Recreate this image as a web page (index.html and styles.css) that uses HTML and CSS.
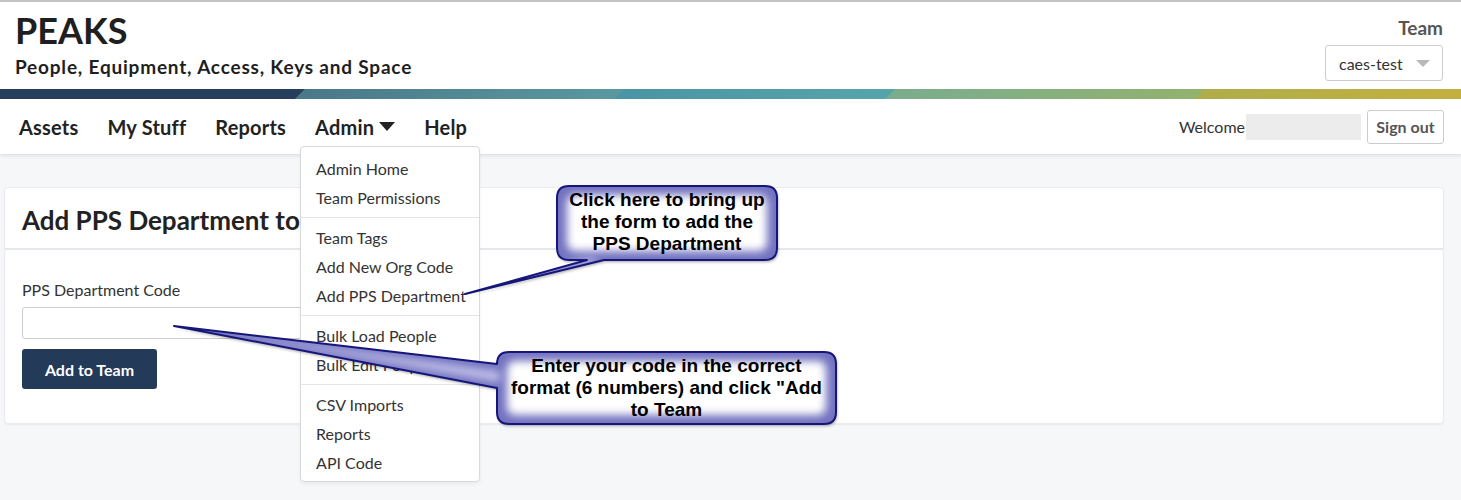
FILE: index.html
```html
<!DOCTYPE html>
<html lang="en">
<head>
<meta charset="utf-8">
<title>PEAKS</title>
<link rel="stylesheet" href="styles.css">
</head>
<body>
<div class="page">
  <header class="masthead">
    <div class="brand">
      <h1 class="brand-title">PEAKS</h1>
      <p class="brand-sub">People, Equipment, Access, Keys and Space</p>
    </div>
    <div class="team">
      <div class="team-label">Team</div>
      <div class="team-select"><span>caes-test</span><span class="select-caret"></span></div>
    </div>
  </header>
  <div class="stripe"></div>
  <nav class="navbar">
    <ul class="nav-links">
      <li class="nav-item">Assets</li>
      <li class="nav-item">My Stuff</li>
      <li class="nav-item">Reports</li>
      <li class="nav-item nav-admin">Admin<span class="nav-caret"></span>
        <div class="dropdown">
          <div class="dd-item">Admin Home</div>
          <div class="dd-item">Team Permissions</div>
          <div class="dd-divider"></div>
          <div class="dd-item">Team Tags</div>
          <div class="dd-item">Add New Org Code</div>
          <div class="dd-item">Add PPS Department</div>
          <div class="dd-divider"></div>
          <div class="dd-item">Bulk Load People</div>
          <div class="dd-item">Bulk Edit People</div>
          <div class="dd-divider"></div>
          <div class="dd-item">CSV Imports</div>
          <div class="dd-item">Reports</div>
          <div class="dd-item">API Code</div>
        </div>
      </li>
      <li class="nav-item">Help</li>
    </ul>
    <div class="nav-user">
      <span class="welcome">Welcome</span>
      <span class="user-blur"></span>
      <button class="btn-signout">Sign out</button>
    </div>
  </nav>
  <main class="content">
    <section class="card">
      <div class="card-header"><h2>Add PPS Department to Team</h2></div>
      <div class="card-body">
        <label class="field-label">PPS Department Code</label>
        <input class="field-input" type="text">
        <button class="btn-primary">Add to Team</button>
      </div>
    </section>
  </main>

  <svg class="callout-shapes" width="1461" height="500" viewBox="0 0 1461 500" aria-hidden="true">
    <defs>
      <path id="shape1" d="M569,186 H765 Q777,186 777,198 V248 Q777,260 765,260 H604 L465,294 L587,260 H569 Q557,260 557,248 V198 Q557,186 569,186 Z"/>
      <path id="shape2" d="M509,352 H824 Q836,352 836,364 V412 Q836,424 824,424 H509 Q497,424 497,412 V388 L174,326 L497,364 Q497,352 509,352 Z"/>
      <clipPath id="clip1"><use href="#shape1"/></clipPath>
      <clipPath id="clip2"><use href="#shape2"/></clipPath>
      <filter id="soft" x="-20%" y="-50%" width="140%" height="200%">
        <feGaussianBlur stdDeviation="4.5"/>
      </filter>
      <filter id="shadow" x="-10%" y="-10%" width="120%" height="130%">
        <feDropShadow dx="1" dy="2" stdDeviation="1.5" flood-color="#000" flood-opacity="0.35"/>
      </filter>
    </defs>
    <use href="#shape1" fill="#7272c0" filter="url(#shadow)"/>
    <g clip-path="url(#clip1)">
      <rect x="567" y="195" width="200" height="56" rx="8" fill="#fff" filter="url(#soft)"/>
      <path d="M600,262 L470,292 L590,258 Z" fill="#c8c8ec" filter="url(#soft)"/>
    </g>
    <use href="#shape1" fill="none" stroke="#16167a" stroke-width="2" stroke-linejoin="round"/>

    <use href="#shape2" fill="#7272c0" filter="url(#shadow)"/>
    <g clip-path="url(#clip2)">
      <rect x="507" y="361" width="319" height="54" rx="8" fill="#fff" filter="url(#soft)"/>
      <path d="M500,372 L180,326 L500,382 Z" fill="#c8c8ec" filter="url(#soft)"/>
    </g>
    <use href="#shape2" fill="none" stroke="#16167a" stroke-width="2" stroke-linejoin="round"/>
  </svg>
  <div class="callout callout-one">Click here to bring up the form to add the PPS Department</div>
  <div class="callout callout-two">Enter your code in the correct format (6 numbers) and click "Add to Team</div>
</div>
</body>
</html>
```
FILE: styles.css
```css
* { box-sizing: border-box; }
html, body { margin: 0; padding: 0; }
body {
  font-family: Lato, "Open Sans", "Liberation Sans", sans-serif;
  color: #222;
  background: #f6f7f9;
  width: 1461px;
  height: 500px;
  overflow: hidden;
}
.page { position: relative; width: 1461px; height: 500px; }

.masthead {
  display: flex;
  justify-content: space-between;
  background: #fff;
  border-top: 2px solid #c4c4c4;
  height: 89px;
  padding: 0 18px 0 15px;
}
.brand-title {
  margin: 7px 0 0;
  font-size: 36px;
  font-weight: 700;
  line-height: 42px;
  color: #1f1f1f;
}
.brand-sub {
  margin: 5px 0 0;
  font-size: 19px;
  font-weight: 700;
  letter-spacing: 0.8px;
  line-height: 22px;
  color: #1f1f1f;
}
.team {
  display: flex;
  flex-direction: column;
  align-items: flex-end;
}
.team-label {
  margin-top: 14px;
  font-size: 19px;
  font-weight: 700;
  line-height: 24px;
  color: #555;
}
.team-select {
  margin-top: 5px;
  width: 118px;
  height: 36px;
  border: 1px solid #ccc;
  border-radius: 3px;
  display: flex;
  align-items: center;
  justify-content: space-between;
  padding: 0 12px 0 13px;
  font-size: 16px;
  color: #333;
}
.select-caret {
  width: 0; height: 0;
  border-left: 7px solid transparent;
  border-right: 7px solid transparent;
  border-top: 7px solid #b9b9bd;
}

.stripe {
  height: 10px;
  background: linear-gradient(135deg,
    #253f5d 0px, #253f5d 215px,
    #4a7888 216px, #5a98a1 441px,
    #4a95a5 442px, #56a4ab 632px,
    #7aad8e 634px, #92b26e 851px,
    #afad4a 853px, #c4b03f 1040px);
}

.navbar {
  position: relative;
  z-index: 2;
  display: flex;
  justify-content: space-between;
  align-items: center;
  height: 56px;
  background: #fff;
  border-bottom: 1px solid #e2e3e7;
  box-shadow: 0 2px 3px rgba(0,0,0,0.06);
  padding: 0 17px 0 19px;
}
.nav-links {
  display: flex;
  gap: 29px;
  list-style: none;
  margin: 0;
  padding: 0;
}
.nav-item {
  font-size: 20px;
  font-weight: 700;
  letter-spacing: 0.2px;
  color: #222;
  line-height: 58px;
}
.nav-admin { position: relative; }
.nav-caret {
  display: inline-block;
  width: 0; height: 0;
  margin-left: 5px;
  vertical-align: 4px;
  border-left: 8px solid transparent;
  border-right: 8px solid transparent;
  border-top: 9px solid #222;
}
.nav-user { display: flex; align-items: center; }
.welcome { font-size: 16px; color: #333; }
.user-blur {
  display: inline-block;
  width: 115px;
  height: 26px;
  margin-left: 1px;
  background: #ececec;
}
.btn-signout {
  margin-left: 6px;
  width: 77px;
  height: 34px;
  background: #fff;
  border: 1px solid #ccc;
  border-radius: 3px;
  font-family: inherit;
  font-size: 16px;
  font-weight: 700;
  color: #555;
  padding: 0;
}

.dropdown {
  position: absolute;
  top: 48px;
  left: -15px;
  width: 180px;
  background: #fff;
  border: 1px solid #d9d9d9;
  border-radius: 4px;
  padding: 7px 0 4px;
  line-height: normal;
  letter-spacing: 0;
  box-shadow: 0 2px 4px rgba(0,0,0,0.05);
}
.dd-item {
  height: 29px;
  line-height: 30px;
  padding-left: 15px;
  font-size: 16px;
  font-weight: 400;
  color: #333;
  white-space: nowrap;
}
.dd-divider {
  height: 1px;
  margin: 5px 0;
  background: #e4e4e4;
}

.content {
  padding: 32px 17px 0 4px;
}
.card {
  background: #fff;
  border: 1px solid #ebecef;
  border-radius: 4px;
  box-shadow: 0 1px 2px rgba(0,0,0,0.06);
  height: 237px;
}
.card-header {
  height: 62px;
  border-bottom: 2px solid #e6e7eb;
  display: flex;
  align-items: center;
  padding: 3px 17px 0;
}
.card-header h2 {
  margin: 0;
  font-size: 26px;
  font-weight: 700;
  color: #222;
  white-space: nowrap;
}
.card-body {
  padding: 30px 17px 0;
  display: flex;
  flex-direction: column;
  align-items: flex-start;
}
.field-label {
  font-size: 16px;
  color: #333;
  line-height: 20px;
}
.field-input {
  margin-top: 7px;
  width: 420px;
  height: 32px;
  border: 1px solid #ccc;
  border-radius: 3px;
}
.btn-primary {
  margin-top: 10px;
  width: 135px;
  height: 40px;
  background: #233a59;
  color: #fff;
  border: none;
  border-radius: 3px;
  font-family: inherit;
  font-size: 16px;
  font-weight: 700;
}

.callout-shapes {
  position: absolute;
  left: 0;
  top: 0;
  z-index: 5;
  pointer-events: none;
}
.callout {
  position: absolute;
  z-index: 6;
  font-family: "Liberation Sans", Arial, sans-serif;
  font-weight: 700;
  font-size: 19px;
  line-height: 22px;
  color: #000;
  text-align: center;
}
.callout-one {
  left: 557px;
  top: 189px;
  width: 220px;
  padding: 0 6px;
}
.callout-two {
  left: 497px;
  top: 355px;
  width: 339px;
  padding: 0 4px;
}
```
